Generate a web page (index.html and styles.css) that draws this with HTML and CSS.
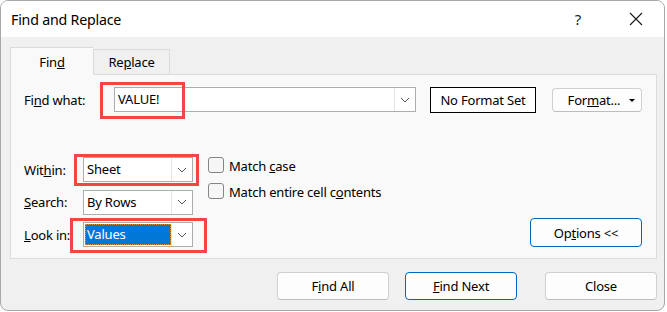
FILE: index.html
```html
<!DOCTYPE html>
<html lang="en">

<head>
  <meta charset="UTF-8">
  <meta name="viewport" content="width=device-width, initial-scale=1.0">
  <title>Find and Replace</title>
  <link rel="stylesheet" href="styles.css">
</head>

<body>

  <div class="dialog">
    <!-- title bar -->
    <div class="titlebar">
      <span class="title">Find and Replace</span>
      <span class="help">?</span>
      <span class="close-x">
        <svg width="14" height="14" viewBox="0 0 14 14">
          <path d="M1 1 L13 13 M13 1 L1 13" stroke="#1a1a1a" stroke-width="1.1" fill="none" />
        </svg>
      </span>
    </div>

    <div class="body">
      <div class="tabs">
        <div class="tab active">Fin<u>d</u></div>
        <div class="tab">Re<u>p</u>lace</div>
      </div>

      <div class="panel">
        <div class="find-row">
          <label class="lbl find-lbl">Fi<u>n</u>d what:</label>
          <div class="combo combo-find">
            <span class="combo-text">VALUE!</span>
            <span class="drop">
              <svg width="10" height="6" viewBox="0 0 10 6">
                <path d="M1 1 L5 5 L9 1" stroke="#555" stroke-width="1" fill="none" />
              </svg>
            </span>
          </div>
          <div class="no-format">No Format Set</div>
          <button class="btn btn-format">For<u>m</u>at...<span class="tri"></span></button>
        </div>

        <div class="options-area">
          <div class="opt-grid">
            <label class="lbl">Wit<u>h</u>in:</label>
            <div class="combo">
              <span class="combo-text">Sheet</span>
              <span class="drop">
                <svg width="10" height="6" viewBox="0 0 10 6">
                  <path d="M1 1 L5 5 L9 1" stroke="#555" stroke-width="1" fill="none" />
                </svg>
              </span>
            </div>

            <label class="lbl"><u>S</u>earch:</label>
            <div class="combo">
              <span class="combo-text">By Rows</span>
              <span class="drop">
                <svg width="10" height="6" viewBox="0 0 10 6">
                  <path d="M1 1 L5 5 L9 1" stroke="#555" stroke-width="1" fill="none" />
                </svg>
              </span>
            </div>

            <label class="lbl"><u>L</u>ook in:</label>
            <div class="combo">
              <span class="combo-text selected">Values</span>
              <span class="drop">
                <svg width="10" height="6" viewBox="0 0 10 6">
                  <path d="M1 1 L5 5 L9 1" stroke="#555" stroke-width="1" fill="none" />
                </svg>
              </span>
            </div>
          </div>

          <div class="checks">
            <div class="check"><span class="box"></span><span class="check-text">Match <u>c</u>ase</span></div>
            <div class="check"><span class="box"></span><span class="check-text">Match entire cell c<u>o</u>ntents</span></div>
          </div>

          <button class="btn btn-default btn-options">Op<u>t</u>ions &lt;&lt;</button>
        </div>

        <!-- red highlight marks -->
        <div class="mark mark-find"></div>
        <div class="mark mark-within"></div>
        <div class="mark mark-lookin"></div>
      </div>

      <div class="actions">
        <button class="btn btn-act">F<u>i</u>nd All</button>
        <button class="btn btn-act btn-default"><u>F</u>ind Next</button>
        <button class="btn btn-act btn-close">Close</button>
      </div>
    </div>
  </div>

</body>

</html>
```

FILE: styles.css
```css
body {
  margin: 0;
  padding: 0;
  background: #ffffff;
  font-family: "Noto Sans", "Open Sans", sans-serif;
  font-size: 13px;
  letter-spacing: -0.2px;
  color: #000;
}

.dialog {
  width: 665px;
  height: 311px;
  box-sizing: border-box;
  border: 1px solid #a8a8a8;
  border-radius: 8px;
  background: #f0f0f0;
  overflow: hidden;
}

/* title bar */
.titlebar {
  height: 36px;
  background: #fff;
  display: flex;
  align-items: center;
  padding-left: 10px;
}

.title {
  font-size: 14.2px;
  flex: 1;
}

.help {
  font-size: 15px;
  color: #222;
  width: 20px;
  text-align: center;
  margin-right: 41px;
}

.close-x {
  display: flex;
  margin-right: 21px;
}

/* tabs + panel */
.body {
  padding: 10px 0 0 9px;
}

.tabs {
  display: flex;
  align-items: flex-end;
  height: 27px;
}

.tab {
  height: 25px;
  box-sizing: border-box;
  border: 1px solid #dadada;
  border-bottom: none;
  padding: 3px 0 0;
  text-align: center;
  width: 77px;
  background: #f0f0f0;
}

.tab.active {
  width: 83px;
  height: 28px;
  margin-bottom: -1px;
  padding-top: 5px;
  background: #f9f9f9;
  position: relative;
  z-index: 1;
  border-right: none;
}

.panel {
  width: 647px;
  height: 185px;
  box-sizing: border-box;
  border: 1px solid #dcdcdc;
  background: #f9f9f9;
  padding: 12px 14px 0 13px;
  position: relative;
}

.lbl {
  white-space: nowrap;
}

.find-row {
  display: flex;
  align-items: flex-start;
}

.find-lbl {
  width: 90px;
  line-height: 26px;
}

.combo {
  height: 25px;
  box-sizing: border-box;
  border: 1px solid #adadad;
  background: #fff;
  display: flex;
  align-items: stretch;
}

.combo-find {
  width: 302px;
}

.combo-text {
  flex: 1;
  padding-left: 3px;
  line-height: 23px;
}

.combo-text.selected {
  margin: 1px 0 1px 1px;
  line-height: 21px;
  padding-left: 2px;
  background: #0078d7;
  color: #fff;
  outline: 1px dotted #e0902a;
  outline-offset: -1px;
}

.drop {
  width: 20px;
  border-left: 1px solid #e4e4e4;
  display: flex;
  align-items: center;
  justify-content: center;
}

.no-format {
  margin-left: 14px;
  width: 106px;
  height: 26px;
  box-sizing: border-box;
  border: 1px solid #000;
  background: #fff;
  text-align: center;
  line-height: 24px;
}

.btn {
  font-family: inherit;
  font-size: inherit;
  letter-spacing: inherit;
  color: #000;
  background: #fdfdfd;
  border: 1px solid #d0d0d0;
  border-bottom-color: #bdbdbd;
  border-radius: 4px;
  padding: 0;
  cursor: pointer;
  flex-shrink: 0;
}

.btn-default {
  border: 1px solid #0067c0;
}

.btn-format {
  margin-left: 16px;
  margin-top: 1px;
  width: 90px;
  height: 24px;
  position: relative;
  padding-right: 6px;
}

.tri {
  position: absolute;
  right: 6px;
  top: 10px;
  border-left: 3px solid transparent;
  border-right: 3px solid transparent;
  border-top: 3px solid #000;
}

/* within / search / look in */
.options-area {
  display: flex;
  align-items: flex-start;
  margin-top: 44px;
}

.opt-grid {
  display: grid;
  grid-template-columns: 59px 110px;
  grid-auto-rows: 25px;
  row-gap: 7.5px;
  align-items: center;
}

.checks {
  margin-left: 15px;
  display: flex;
  flex-direction: column;
  gap: 10px;
}

.check {
  display: flex;
  align-items: center;
  height: 16px;
  white-space: nowrap;
}

.check-text {
  padding-top: 2px;
}

.box {
  width: 16px;
  height: 16px;
  box-sizing: border-box;
  border: 1px solid #858585;
  border-radius: 3px;
  background: #f6f6f6;
  margin-right: 5px;
}

.btn-options {
  margin-left: auto;
  align-self: flex-end;
  width: 112px;
  height: 29px;
}

/* red highlight marks */
.mark {
  position: absolute;
  border: 3px solid #f04646;
  box-sizing: border-box;
  pointer-events: none;
}

.mark-find {
  left: 89px;
  top: 7px;
  width: 85px;
  height: 37px;
}

.mark-within {
  left: 63px;
  top: 79px;
  width: 125px;
  height: 32px;
}

.mark-lookin {
  left: 59px;
  top: 143px;
  width: 137px;
  height: 35px;
}

/* bottom buttons */
.actions {
  display: flex;
  margin-top: 13px;
  padding-left: 267px;
}

.btn-act {
  width: 112px;
  height: 28px;
  margin-right: 16px;
}

.btn-close {
  margin-left: 12px;
}
```
